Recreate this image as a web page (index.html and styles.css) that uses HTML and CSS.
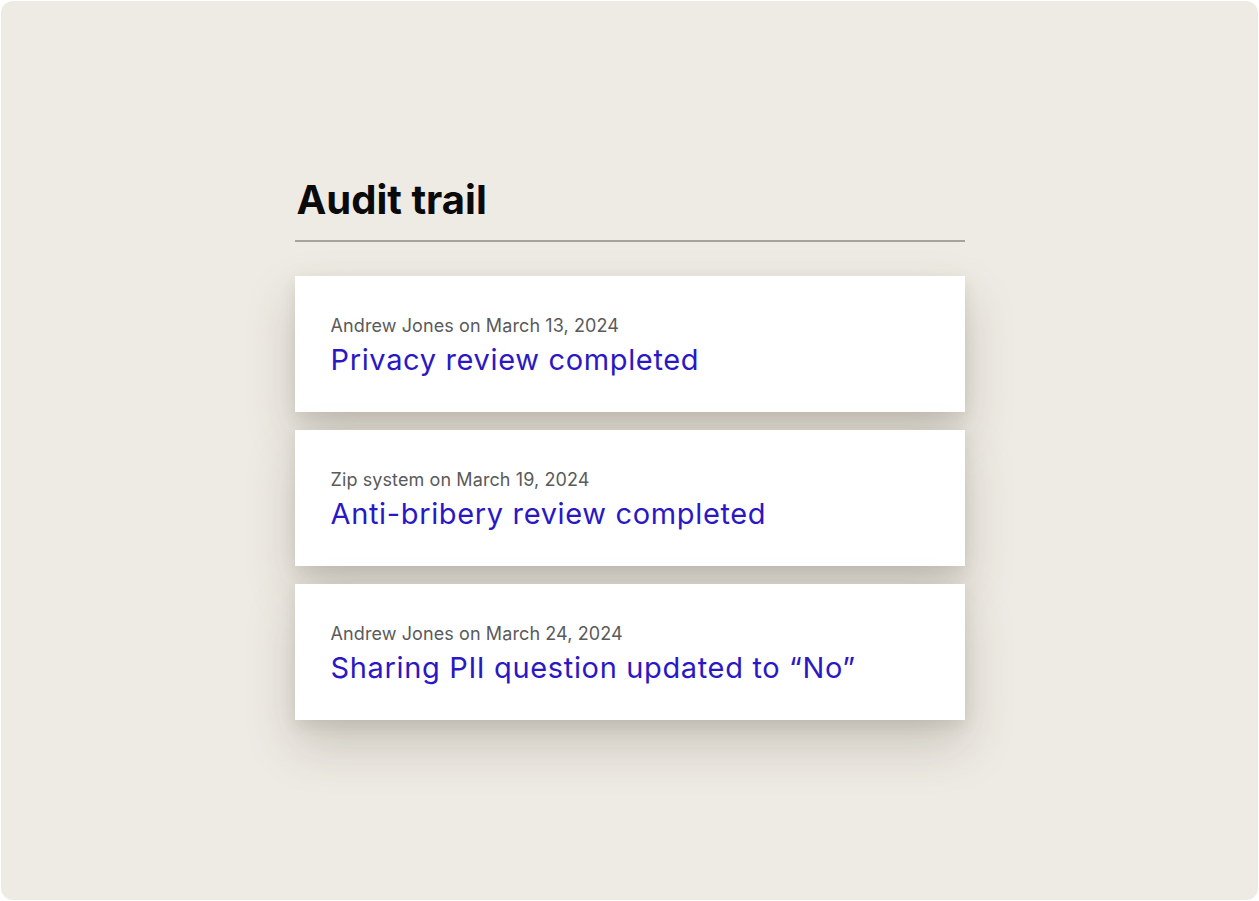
FILE: index.html
```html
<!DOCTYPE html>
<html lang="en">
<head>
<meta charset="utf-8">
<title>Audit trail</title>
<link rel="stylesheet" href="styles.css">
</head>
<body>
<div class="panel">
  <section class="audit">
    <h1 class="audit-title">Audit trail</h1>
    <div class="entries">
      <article class="entry">
        <p class="entry-meta">Andrew Jones on March 13, 2024</p>
        <p class="entry-text">Privacy review completed</p>
      </article>
      <article class="entry">
        <p class="entry-meta">Zip system on March 19, 2024</p>
        <p class="entry-text">Anti-bribery review completed</p>
      </article>
      <article class="entry">
        <p class="entry-meta">Andrew Jones on March 24, 2024</p>
        <p class="entry-text">Sharing PII question updated to “No”</p>
      </article>
    </div>
  </section>
</div>
</body>
</html>
```
FILE: styles.css
```css
html, body {
  margin: 0;
  padding: 0;
  background: #ffffff;
}
body {
  font-family: Inter, "Liberation Sans", sans-serif;
}
.panel {
  margin: 1px;
  height: 899px;
  border-radius: 12px;
  background: #eeebe4;
  display: flex;
  justify-content: center;
  box-sizing: border-box;
  padding-top: 176px;
}
.audit {
  width: 670px;
}
.audit-title {
  margin: 0;
  padding: 0 0 17px 2px;
  font-size: 40px;
  line-height: 46px;
  font-weight: 700;
  letter-spacing: 0;
  color: #0a0a0a;
  border-bottom: 2px solid #a6a29c;
}
.entries {
  margin-top: 34px;
  display: flex;
  flex-direction: column;
  gap: 18px;
}
.entry {
  background: #ffffff;
  height: 136px;
  box-sizing: border-box;
  padding: 39px 36px 0 36px;
  box-shadow: 0 24px 50px rgba(70, 60, 40, 0.22), 0 6px 14px rgba(70, 60, 40, 0.10);
}
.entry-meta {
  margin: 0;
  font-size: 18px;
  line-height: 22px;
  letter-spacing: 0.1px;
  color: #5a5a5a;
}
.entry-text {
  margin: 6px 0 0 0;
  font-size: 29px;
  line-height: 34px;
  letter-spacing: 0.65px;
  color: #2b18c4;
}
```
